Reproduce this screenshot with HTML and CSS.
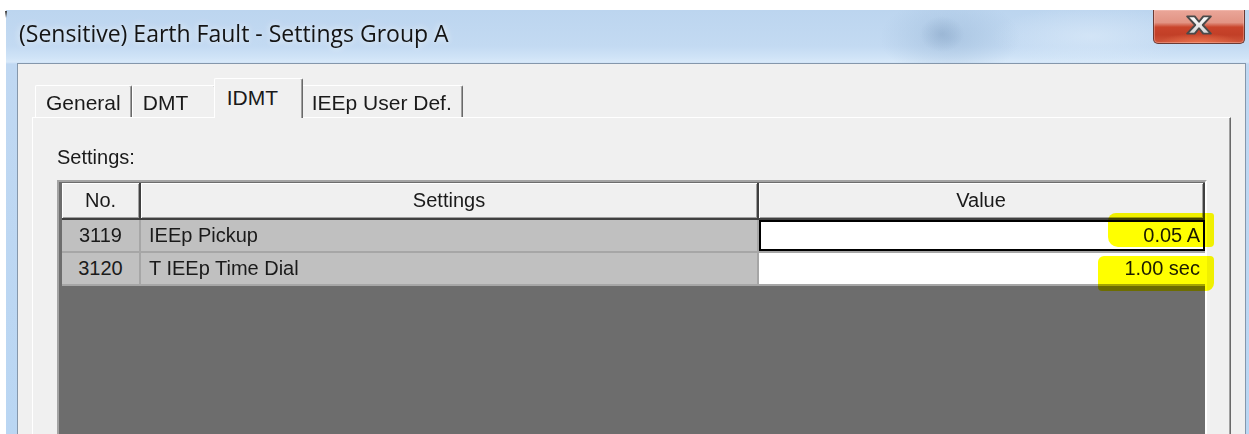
FILE: index.html
```html
<!DOCTYPE html>
<html lang="en">
<head>
<meta charset="utf-8">
<title>(Sensitive) Earth Fault - Settings Group A</title>
<link rel="stylesheet" href="styles.css">
</head>
<body>
<div class="window">
  <div class="titlebar">
    <div class="title">(Sensitive) Earth Fault - Settings Group A</div>
    <button class="close" aria-label="Close">
      <svg width="28" height="22" viewBox="0 0 26 20">
        <defs>
          <linearGradient id="xfill" x1="0" y1="0" x2="0" y2="1">
            <stop offset="0" stop-color="#ffffff"/>
            <stop offset="1" stop-color="#d4d4d4"/>
          </linearGradient>
        </defs>
        <polygon points="2,2 9,2 13,7 17,2 24,2 16.5,10 24,18 17,18 13,13 9,18 2,18 9.5,10"
                 fill="url(#xfill)" stroke="#4a4a4a" stroke-width="1.8" stroke-linejoin="round"/>
      </svg>
    </button>
  </div>

  <div class="client">
    <div class="tabs">
      <div class="tab">General</div>
      <div class="tab">DMT</div>
      <div class="tab active">IDMT</div>
      <div class="tab">IEEp User Def.</div>
    </div>

    <div class="page">
      <div class="label">Settings:</div>
      <div class="grid">
        <div class="row row-head">
          <div class="hcell">No.</div>
          <div class="hcell">Settings</div>
          <div class="hcell">Value</div>
        </div>
        <div class="row row-data">
          <div class="cell num">3119</div>
          <div class="cell">IEEp Pickup</div>
          <div class="cell value focused">0.05 A<span class="marker marker-a"></span></div>
        </div>
        <div class="row row-data">
          <div class="cell num">3120</div>
          <div class="cell">T IEEp Time Dial</div>
          <div class="cell value">1.00 sec<span class="marker marker-b"></span></div>
        </div>
      </div>
    </div>
  </div>
</div>
</body>
</html>
```

FILE: styles.css
```css
* {
  box-sizing: border-box;
}

html,
body {
  margin: 0;
  width: 1249px;
  height: 434px;
  overflow: hidden;
  background: #ffffff;
}

body {
  font-family: "Liberation Sans", Arial, sans-serif;
  color: #1a1a1a;
}

/* Glass window frame */
.window {
  position: relative;
  margin: 10px 0 0 6px;
  width: 1254px;
  height: 470px;
  display: flex;
  flex-direction: column;
  background:
    radial-gradient(ellipse 22px 18px at 936px 24px, rgba(120, 150, 185, 0.35), rgba(120, 150, 185, 0) 100%),
    radial-gradient(ellipse 70px 40px at 944px 28px, rgba(150, 180, 212, 0.5), rgba(150, 180, 212, 0) 100%),
    radial-gradient(ellipse 100px 30px at 1085px 26px, rgba(222, 236, 250, 0.6), rgba(222, 236, 250, 0) 100%),
    linear-gradient(to bottom, #bcd5ef 0px, #c3daf2 36px, #cfe3f7 47px, #d8e9f9 52px, #c0d8f2 54px, #b9d6f3 100%);
}

.window::before {
  content: "";
  position: absolute;
  left: -1px;
  top: 1px;
  width: 2px;
  height: 7px;
  background: linear-gradient(to bottom, #3a3a3a, rgba(58, 58, 58, 0));
}

.titlebar {
  height: 53px;
  flex: none;
  display: flex;
  justify-content: space-between;
  align-items: flex-start;
}

.title {
  margin: 8px 0 0 13px;
  font-family: "Open Sans", "Noto Sans", sans-serif;
  font-size: 23px;
  line-height: 31px;
  color: #141414;
  text-shadow: 0 0 6px rgba(255, 255, 255, 0.7), 0 0 12px rgba(255, 255, 255, 0.4);
}

.close {
  width: 92px;
  height: 34px;
  margin: 0 15px 0 0;
  padding: 0;
  border: 1px solid #6a3a34;
  border-top: none;
  border-radius: 0 0 5px 5px;
  display: flex;
  align-items: center;
  justify-content: center;
  background:
    radial-gradient(ellipse 40px 10px at 50% 100%, rgba(240, 120, 80, 0.8), rgba(240, 120, 80, 0)),
    linear-gradient(to bottom, #eaa699 0%, #e29484 38%, #c9442b 52%, #c23f27 75%, #d0573c 100%);
  box-shadow: inset 0 0 0 1px rgba(255, 210, 200, 0.35);
}

.close svg {
  margin-top: -3px;
}

/* Dialog client area */
.client {
  flex: 1;
  margin: 0 14px 0 11px;
  padding: 14px 14px 0 14px;
  background: #f0f0f0;
  border: 1px solid #8597ab;
  border-bottom: none;
  display: flex;
  flex-direction: column;
}

.tabs {
  height: 39px;
  flex: none;
  display: flex;
  align-items: flex-end;
  padding-left: 3px;
}

.tab {
  height: 32px;
  min-width: 84px;
  padding: 5px 10px 0 10px;
  font-size: 21px;
  line-height: 24px;
  white-space: nowrap;
  background: #f0f0f0;
  border-top: 1px solid #ffffff;
  border-left: 1px solid #ffffff;
  border-right: 1px solid #696969;
  border-radius: 2px 2px 0 0;
  box-shadow: inset -1px 0 #a0a0a0;
}

.tab.active {
  position: relative;
  z-index: 1;
  height: 40px;
  min-width: 89px;
  margin: 0 -2px -1px -2px;
  padding: 7px 10px 0 12px;
}

.page {
  flex: 1;
  display: flex;
  flex-direction: column;
  padding: 0 23px 0 24px;
  border-top: 1px solid #ffffff;
  border-left: 1px solid #ffffff;
  border-right: 1px solid #696969;
  box-shadow: inset -1px 0 #a0a0a0;
}

.label {
  margin-top: 28px;
  font-size: 20px;
  line-height: 23px;
}

/* Settings table */
.grid {
  flex: 1;
  margin-top: 11px;
  padding: 1px 0 0 3px;
  background: #6d6d6d;
  border: 2px solid;
  border-color: #a3a3a3 #ffffff #ffffff #a3a3a3;
}

.row {
  display: grid;
  grid-template-columns: 77px 616px 1fr;
  column-gap: 2px;
  font-size: 20px;
}

.row-head {
  height: 37px;
  padding: 0 2px 2px 0;
  background: #404040;
}

.hcell {
  display: flex;
  align-items: center;
  justify-content: center;
  background: #f0f0f0;
  box-shadow: inset 1px 1px #ffffff, inset -1px -1px #a0a0a0;
}

.row-data {
  height: 33px;
  padding-bottom: 2px;
  background: #a6a6a6;
}

.cell {
  position: relative;
  display: flex;
  align-items: center;
  padding: 0 8px;
  background: #c0c0c0;
}

.cell.num {
  justify-content: center;
  padding: 0;
}

.cell.value {
  justify-content: flex-end;
  padding: 0 5px 0 0;
  background: #ffffff;
}

.cell.focused {
  box-shadow: inset 0 0 0 2px #000000;
}

/* Highlighter strokes over the values */
.marker {
  position: absolute;
  background: #ffff00;
  mix-blend-mode: multiply;
}

.marker-a {
  right: -9px;
  top: -7px;
  width: 106px;
  height: 34px;
  border-radius: 8px 3px 4px 10px;
}

.marker-b {
  right: -9px;
  top: 3px;
  width: 116px;
  height: 35px;
  border-radius: 6px 4px 8px 4px;
}
```
